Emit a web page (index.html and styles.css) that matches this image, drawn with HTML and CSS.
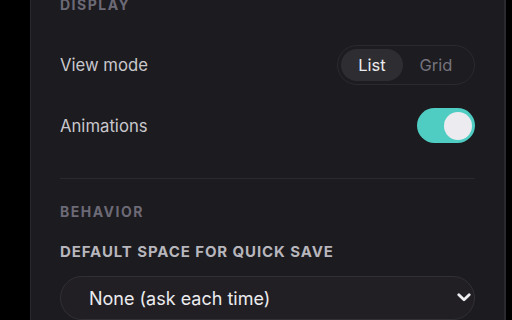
FILE: index.html
```html
<!DOCTYPE html>
<html lang="en">
<head>
<meta charset="utf-8">
<title>Settings</title>
<link rel="stylesheet" href="styles.css">
</head>
<body>
<div class="app">
  <aside class="rail"></aside>
  <section class="panel">
    <h3 class="section-title">Display</h3>
    <div class="row row-view">
      <span class="row-label">View mode</span>
      <div class="segmented">
        <button class="seg seg-active">List</button>
        <button class="seg">Grid</button>
      </div>
    </div>
    <div class="row row-anim">
      <span class="row-label">Animations</span>
      <div class="toggle"><span class="knob"></span></div>
    </div>
    <hr class="divider">
    <h3 class="section-title section-behavior">Behavior</h3>
    <label class="field-label">Default space for quick save</label>
    <div class="select">
      <span class="select-value">None (ask each time)</span>
      <svg class="chev" width="14" height="9" viewBox="0 0 14 9"><path d="M1.8 1.8l5.2 5 5.2-5" fill="none" stroke="#ececef" stroke-width="2.8" stroke-linecap="round" stroke-linejoin="round"/></svg>
    </div>
  </section>
  <aside class="rail-right"></aside>
</div>
</body>
</html>
```
FILE: styles.css
```css
* { box-sizing: border-box; }
html, body { margin: 0; padding: 0; background: #000; }
body {
  width: 512px;
  height: 320px;
  overflow: hidden;
  font-family: Inter, "Noto Sans", sans-serif;
  -webkit-font-smoothing: antialiased;
}
.app { display: flex; height: 320px; }
.rail { width: 30px; flex: none; background: #000; }
.rail-right { width: 6px; flex: none; background: #000; }
.panel {
  flex: 1;
  background: #1c1b1f;
  border-left: 1px solid #2a292e;
  border-right: 2px solid #2a292e;
  padding: 0 29px 0 29px;
  margin-top: -3px;
  display: flex;
  flex-direction: column;
}
.section-title {
  margin: 0;
  font-size: 14px;
  line-height: 16px;
  font-weight: 700;
  letter-spacing: 1.5px;
  text-transform: uppercase;
  color: #6c6a76;
}
.row {
  display: flex;
  align-items: center;
  justify-content: space-between;
}
.row-view { margin-top: 32px; }
.row-anim { margin-top: 23px; }
.row-label { font-size: 16.7px; color: #c9c8cd; }
.segmented {
  display: flex;
  height: 40px;
  padding: 4px;
  border-radius: 20px;
  border: 1px solid #2b2a30;
  background: #1d1c20;
}
.seg {
  font-family: inherit;
  font-size: 16.5px;
  border: 0;
  background: transparent;
  color: #75737d;
  border-radius: 16px;
  padding: 0;
  height: 32px;
  width: 68px;
  margin: -1px 0 0 -1px;
}
.seg-active { background: #2e2d32; color: #ececef; width: 62px; }
.toggle {
  width: 58px;
  height: 35px;
  border-radius: 18px;
  background: #4fcdc3;
  position: relative;
}
.knob {
  position: absolute;
  right: 3px;
  top: 4px;
  width: 28px;
  height: 28px;
  border-radius: 50%;
  background: #ececf0;
}
.divider {
  margin: 35px 0 0;
  border: 0;
  border-top: 1px solid #2a292e;
  height: 0;
}
.section-behavior { margin-top: 25px; }
.field-label {
  margin-top: 24px;
  font-size: 15px;
  line-height: 16px;
  font-weight: 700;
  letter-spacing: 0.9px;
  text-transform: uppercase;
  color: #b7b6bc;
}
.select {
  margin-top: 16px;
  height: 54px;
  border-radius: 27px;
  border: 1px solid #313036;
  background: #211f24;
  display: flex;
  align-items: center;
  justify-content: space-between;
  padding: 0 3px 0 28px;
}
.select-value { font-size: 18px; color: #ececef; }
.chev { display: block; margin-top: -1px; }
```
